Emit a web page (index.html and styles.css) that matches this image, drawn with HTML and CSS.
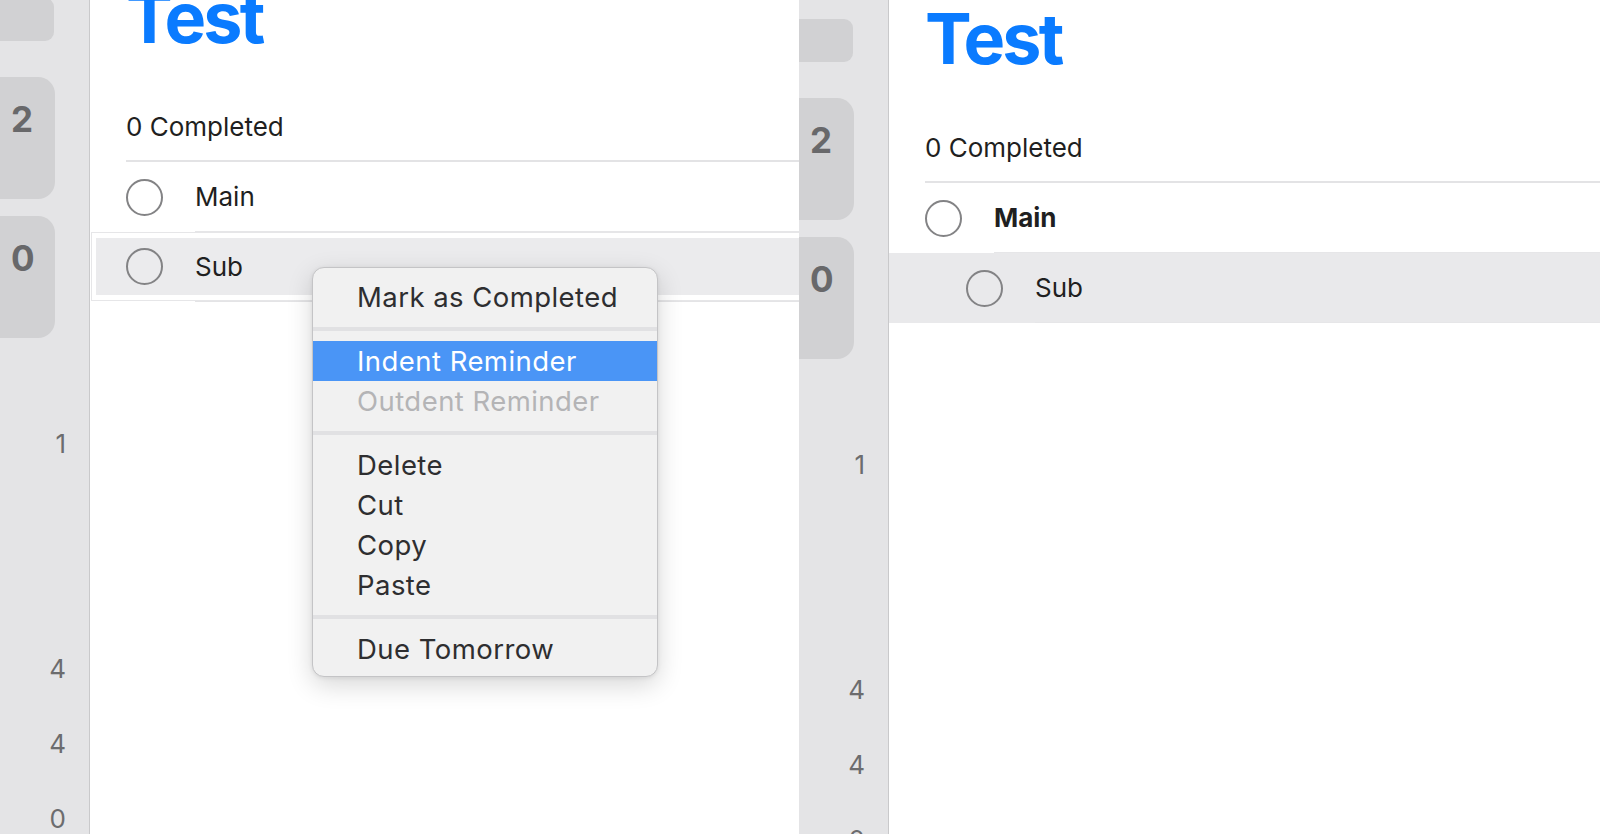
FILE: index.html
```html
<!DOCTYPE html>
<html lang="en">
<head>
<meta charset="utf-8">
<title>Reminders – Indent</title>
<link rel="stylesheet" href="styles.css">
</head>
<body>
  <section class="panel panel-left">
    <div class="panel-body">
      <aside class="sidebar">
        <div class="card-top"></div>
        <div class="card card-first">2</div>
        <div class="card card-second">0</div>
        <div class="count count-1">1</div>
        <div class="count count-2">4</div>
        <div class="count count-3">4</div>
        <div class="count count-4">0</div>
      </aside>
      <main class="main">
        <div class="head">
          <h1 class="title">Test</h1>
          <div class="completed">0 Completed</div>
        </div>
        <div class="row">
          <span class="check"><span class="circle"></span></span>
          <span class="label">Main</span>
        </div>
        <div class="drag-box">
          <div class="row row-drag">
            <span class="check"><span class="circle"></span></span>
            <span class="label">Sub</span>
          </div>
        </div>
        <div class="drag-sep"></div>
      </main>
    </div>
  </section>

  <section class="panel panel-right">
    <div class="panel-body">
      <aside class="sidebar">
        <div class="card-top"></div>
        <div class="card card-first">2</div>
        <div class="card card-second">0</div>
        <div class="count count-1">1</div>
        <div class="count count-2">4</div>
        <div class="count count-3">4</div>
        <div class="count count-4">0</div>
      </aside>
      <main class="main">
        <div class="head">
          <h1 class="title">Test</h1>
          <div class="completed">0 Completed</div>
        </div>
        <div class="row">
          <span class="check"><span class="circle"></span></span>
          <span class="label label-bold">Main</span>
        </div>
        <div class="row row-sub row-selected">
          <span class="check"><span class="circle"></span></span>
          <span class="label">Sub</span>
        </div>
      </main>
    </div>
  </section>

  <div class="menu">
    <div class="menu-item">Mark as Completed</div>
    <div class="menu-sep"></div>
    <div class="menu-item menu-item-active">Indent Reminder</div>
    <div class="menu-item menu-item-disabled">Outdent Reminder</div>
    <div class="menu-sep"></div>
    <div class="menu-item">Delete</div>
    <div class="menu-item">Cut</div>
    <div class="menu-item">Copy</div>
    <div class="menu-item">Paste</div>
    <div class="menu-sep"></div>
    <div class="menu-item">Due Tomorrow</div>
  </div>
</body>
</html>
```

FILE: styles.css
```css
* { box-sizing: border-box; }

html, body {
  margin: 0;
  padding: 0;
}

body {
  width: 1600px;
  height: 834px;
  overflow: hidden;
  display: flex;
  position: relative;
  background: #ffffff;
  font-family: Inter, "Noto Sans", "Liberation Sans", sans-serif;
  color: #1f1f21;
}

.panel {
  height: 834px;
  overflow: hidden;
  flex: none;
}

.panel-left { width: 799px; }
.panel-right { width: 801px; }

.panel-body {
  display: flex;
  height: 900px;
}

.panel-left .panel-body { margin-top: -21px; }

/* Sidebar */
.sidebar {
  width: 90px;
  flex: none;
  background: #e4e4e6;
  border-right: 1px solid #c9c9cb;
  display: flex;
  flex-direction: column;
}

.card-top {
  margin-top: 19px;
  width: 54px;
  height: 43px;
  background: #d1d1d3;
  border-radius: 0 9px 9px 0;
}

.card {
  width: 55px;
  height: 122px;
  background: #d1d1d3;
  border-radius: 0 17px 17px 0;
  font-size: 35px;
  font-weight: 700;
  line-height: 35px;
  color: #68686a;
  padding-top: 25px;
  padding-left: 11px;
}

.card-first { margin-top: 36px; }
.card-second { margin-top: 17px; }

.count {
  height: 30px;
  line-height: 30px;
  font-size: 26px;
  color: #6c6c6e;
  text-align: right;
  padding-right: 23px;
}

.count-1 { margin-top: 91px; }
.count-2 { margin-top: 195px; }
.count-3 { margin-top: 45px; }
.count-4 { margin-top: 45px; }

/* Main */
.main {
  flex: 1;
  min-width: 0;
  background: #ffffff;
  overflow: hidden;
}

.head {
  margin-left: 36px;
  border-bottom: 2px solid #e3e3e5;
}

.title {
  margin: 0;
  height: 80px;
  font-size: 70px;
  line-height: 78px;
  font-weight: 700;
  letter-spacing: -2.8px;
  color: #0a7bff;
}

.completed {
  margin-top: 52px;
  height: 49px;
  font-size: 26px;
  line-height: 32px;
  color: #1f1f21;
}

.row {
  display: flex;
  height: 70px;
  padding-left: 36px;
}

.check {
  width: 37px;
  flex: none;
  display: flex;
  align-items: center;
}

.circle {
  width: 37px;
  height: 37px;
  border-radius: 50%;
  border: 2px solid #838385;
}

.label {
  flex: 1;
  margin-left: 32px;
  display: flex;
  align-items: center;
  font-size: 26px;
  border-bottom: 1px solid #e6e6e8;
}

.label-bold { font-weight: 700; }

/* Right panel: indented, selected sub row */
.row-sub { padding-left: 77px; }
.row-selected { background: #e9e9eb; }

/* Left panel: row being dragged */
.drag-box {
  margin-left: 1px;
  height: 69px;
  border: 1px solid #e6e6e8;
  border-right: none;
  padding: 5px 0 5px 4px;
  background: #ffffff;
}

.row-drag {
  height: 57px;
  padding-left: 30px;
  background: #ebebed;
}

.row-drag .label { border-bottom: none; }

.drag-sep {
  margin-left: 105px;
  height: 1px;
  background: #e4e4e6;
}

/* Context menu */
.menu {
  position: absolute;
  left: 312px;
  top: 267px;
  width: 346px;
  height: 410px;
  padding: 9px 0;
  background: #f1f1f1;
  border: 1px solid #c4c4c6;
  border-radius: 12px;
  box-shadow: 0 8px 26px rgba(0, 0, 0, 0.16), 0 1px 4px rgba(0, 0, 0, 0.08);
}

.menu-item {
  height: 40px;
  padding-left: 44px;
  display: flex;
  align-items: center;
  font-size: 27.5px;
  letter-spacing: 0.45px;
  color: #2e2e30;
}

.menu-item-active {
  background: #4a95f6;
  color: #ffffff;
}

.menu-item-disabled { color: #b4b4b6; }

.menu-sep {
  height: 24px;
  display: flex;
  align-items: center;
}

.menu-sep::before {
  content: "";
  display: block;
  width: 100%;
  height: 4px;
  background: #e1e1e3;
}
```
